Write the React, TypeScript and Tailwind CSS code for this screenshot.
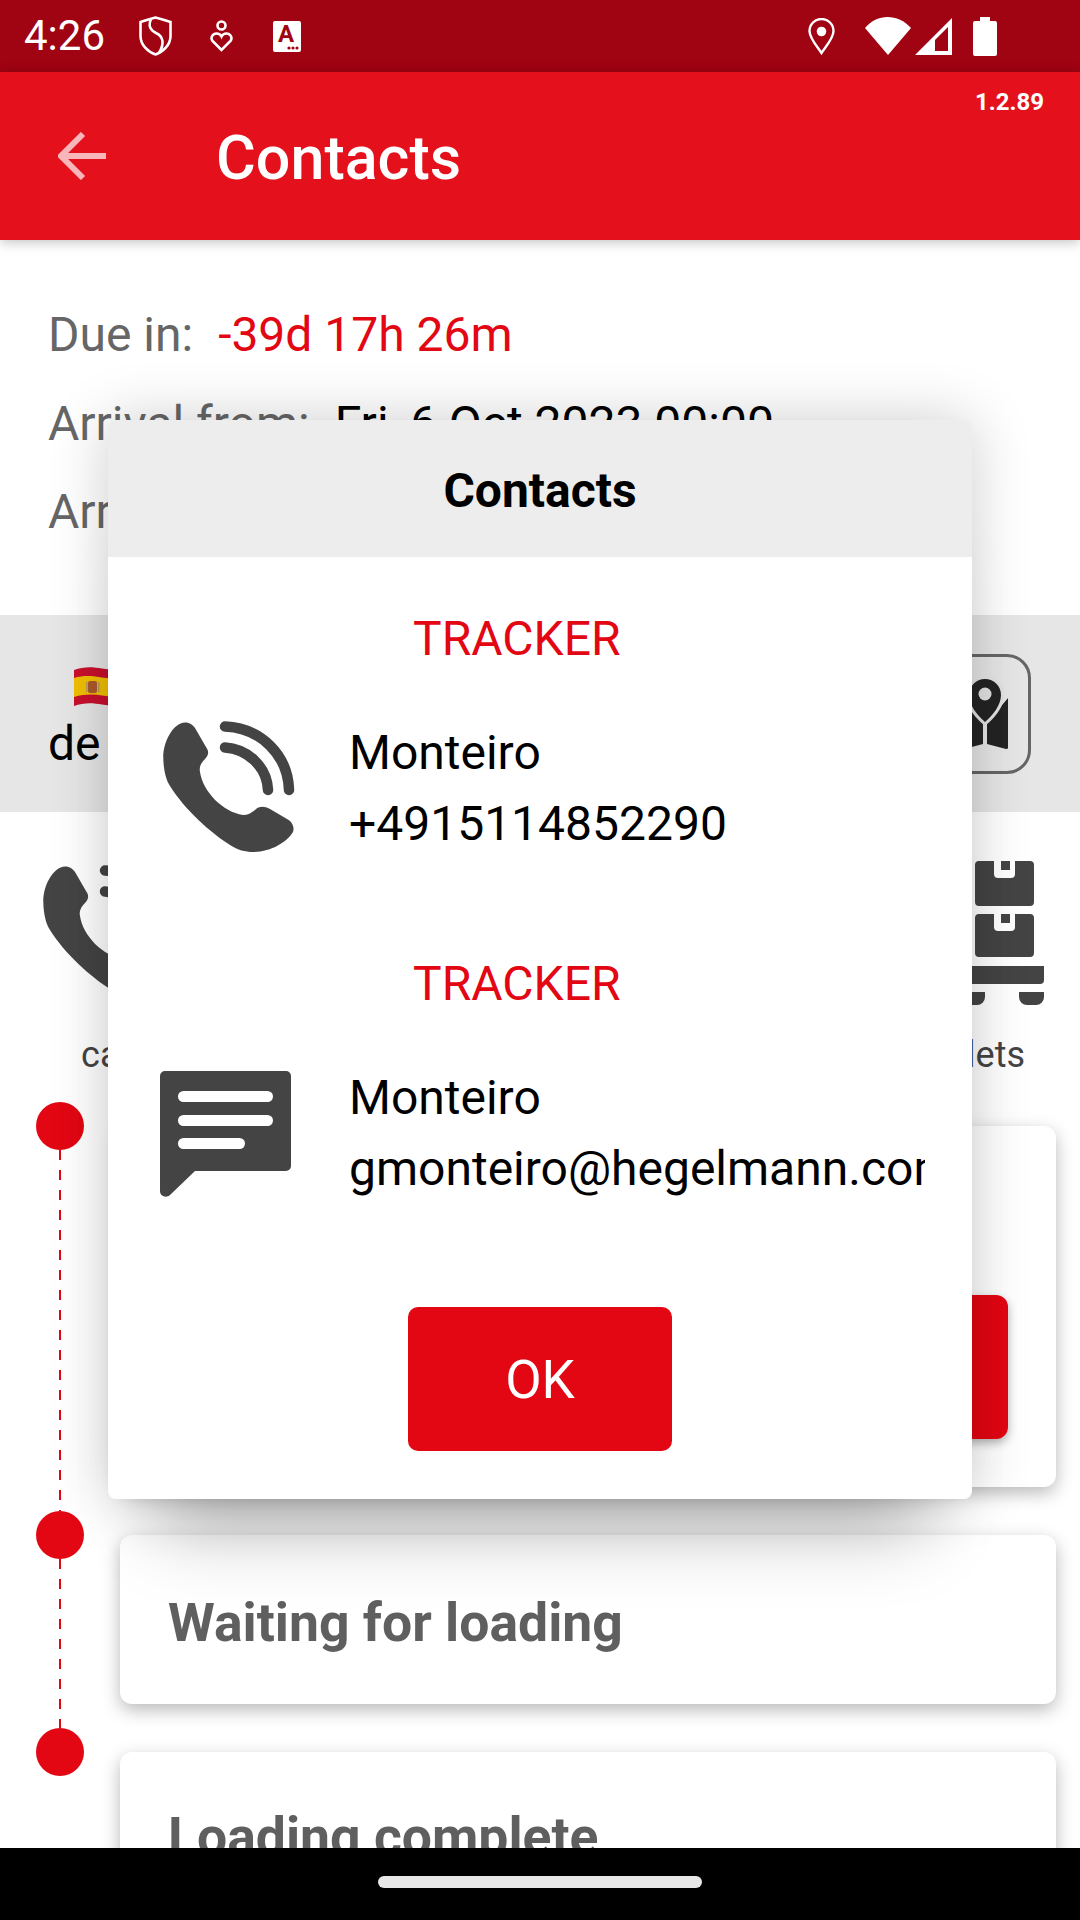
import React from "react";

function PhoneIcon() {
  return (
    <svg width="132" height="132" viewBox="0 0 132 132" className="shrink-0">
      <path
        fill="#444444"
        d="M22 2.500C10 3 0 22 .3 38c.2 12 2.700 22 6.700 28 15 24 41 47 60 59 8 5 15 7 23 7 18 0 34-10 40-20 2-6-2-11-6-13L107 89c-6-3-11-3-15 1-4 3-7 5-12 5C60 92 40 72 37 52c-1-5 1-9 5-13 4-4 4-8 1-12L32 8C29 4 26 2.500 22 2.500Z"
      />
      <path d="M62 6.500C98 8 125 35 126 70" fill="none" stroke="#444444" strokeWidth="10.500" strokeLinecap="round" />
      <path d="M62 27.500C85 29 104 47 105 70" fill="none" stroke="#444444" strokeWidth="10.500" strokeLinecap="round" />
    </svg>
  );
}

function ChatIcon() {
  return (
    <svg width="131" height="126" viewBox="0 0 131 126" className="shrink-0">
      <path
        fill="#444444"
        d="M5 0H126a5 5 0 0 1 5 5V95a5 5 0 0 1-5 5H35L10 124c-3 3-10 2-10-4V5a5 5 0 0 1 5-5Z"
      />
      <rect x="18" y="20" width="95" height="11" rx="5.500" fill="#fff" />
      <rect x="18" y="44" width="95" height="11" rx="5.500" fill="#fff" />
      <rect x="18" y="67" width="67" height="11" rx="5.500" fill="#fff" />
    </svg>
  );
}

function PalletIcon() {
  return (
    <svg width="84" height="144" viewBox="0 0 84 144" className="shrink-0">
      <path fill="#444444" d="M19 0h15v13a4 4 0 0 0 4 4h13a4 4 0 0 0 4-4V0h15a4 4 0 0 1 4 4v37a4 4 0 0 1-4 4H19a4 4 0 0 1-4-4V4a4 4 0 0 1 4-4Z" />
      <rect x="41" y="0" width="9" height="9" fill="#444444" />
      <path fill="#444444" d="M19 53h15v13a4 4 0 0 0 4 4h13a4 4 0 0 0 4-4V53h15a4 4 0 0 1 4 4v35a4 4 0 0 1-4 4H19a4 4 0 0 1-4-4V57a4 4 0 0 1 4-4Z" />
      <rect x="41" y="53" width="9" height="9" fill="#444444" />
      <path fill="#444444" d="M0 105h84v14a4 4 0 0 1-4 4H4a4 4 0 0 1-4-4Z" />
      <path fill="#444444" d="M0 131h25v5a8 8 0 0 1-8 8H8a8 8 0 0 1-8-8Z" />
      <path fill="#444444" d="M59 131h25v5a8 8 0 0 1-8 8h-9a8 8 0 0 1-8-8Z" />
    </svg>
  );
}

function MapPinIcon() {
  return (
    <svg width="46" height="70" viewBox="0 0 46 70">
      <path fill="#242424" d="M25 44L46 19V68.500C46 69.500 45 70 44 70L25 65ZM21 44L0 19V68.500C0 69.500 1 70 2 70L21 65Z" />
      <path
        fill="none"
        stroke="#e2e2e2"
        strokeWidth="6"
        d="M23 0C14 0 7 7 7 16C7 26 15 36 23 43C31 36 39 26 39 16C39 7 32 0 23 0Z"
      />
      <path fill="#242424" d="M23 0C14 0 7 7 7 16C7 26 15 36 23 43C31 36 39 26 39 16C39 7 32 0 23 0Z" />
      <circle cx="23" cy="15" r="6.500" fill="#e2e2e2" />
    </svg>
  );
}

function SpainFlag() {
  return (
    <svg width="50" height="40" viewBox="0 0 50 40">
      <path fill="#c8102e" d="M0 3C10 -1 20 0 28 1.500 36 3 44 3 50 1V37C44 39 36 39 28 37.500 20 36 10 35 0 39Z" />
      <path fill="#f1bf00" d="M0 11C10 8 20 9 28 10.500 36 12 44 11 50 9.500V28.500C44 30 36 30 28 28.500 20 27 10 27 0 30Z" />
      <rect x="14" y="14" width="9" height="12" rx="2" fill="#ad5a2a" />
      <rect x="12" y="15" width="1.500" height="10" fill="#b59a5a" />
      <rect x="24" y="15" width="1.500" height="10" fill="#b59a5a" />
    </svg>
  );
}

function StatusLeft() {
  return (
    <div className="flex items-center">
      <span className="w-[138px] pl-[24px] text-[42px] leading-none text-white">4:26</span>
      <svg width="33" height="40" viewBox="0 0 33 40" fill="none" stroke="#fff" strokeWidth="2.600" className="ml-[1px]">
        <path d="M16.500 1.500C22 3 27 4.500 31.500 6V20C31.500 29 24 36 16.500 38.500 9 36 1.500 29 1.500 20V6C6 4.500 11 3 16.500 1.500Z" />
        <path d="M12 3C9 10 11 14 17 17c7 3 9 10 3 20" />
      </svg>
      <svg width="23" height="32" viewBox="0 0 23 32" fill="none" stroke="#fff" strokeWidth="2.600" className="ml-[38px]">
        <circle cx="11.500" cy="5.500" r="4" />
        <path d="M11.500 30L2.500 21C0 17.500 3 13.500 6.500 13.500c2 0 4 1 5 3 1-2 3-3 5-3 3.500 0 6.500 4 4 7.500Z" />
      </svg>
      <svg width="28" height="31" viewBox="0 0 28 31" className="ml-[40px]">
        <rect width="28" height="31" rx="2" fill="#fff" />
        <text x="13" y="21" textAnchor="middle" fontSize="24" fontWeight="700" fill="#a00311" fontFamily="Roboto, sans-serif">A</text>
        <circle cx="16" cy="27" r="1.600" fill="#a00311" />
        <circle cx="20" cy="27" r="1.600" fill="#a00311" />
        <circle cx="24" cy="27" r="1.600" fill="#a00311" />
      </svg>
    </div>
  );
}

function StatusRight() {
  return (
    <div className="flex items-center pr-[83px]">
      <svg width="27" height="37" viewBox="0 0 27 37" className="mr-[30px]" fill="none">
        <path d="M13.500 35C8 27 1.500 20 1.500 13a12 12 0 0 1 24 0c0 7-6.500 14-12 22Z" stroke="#fff" strokeWidth="2.400" />
        <circle cx="13.500" cy="13.500" r="4.800" fill="#fff" />
      </svg>
      <svg width="46" height="38" viewBox="0 0 46 38" className="mr-[4px]">
        <path fill="#fff" d="M0 11C12-3.600 33-3.600 46 11L23 38Z" />
      </svg>
      <svg width="37" height="37" viewBox="0 0 37 37" className="mr-[21px]">
        <path fill="#fff" d="M37 0V37H0Z" />
        <path fill="#a00311" d="M33 9V33H20V22Z" />
      </svg>
      <svg width="24" height="39" viewBox="0 0 24 39">
        <path fill="#fff" d="M7 0h10v4h5a2 2 0 0 1 2 2v31a2 2 0 0 1-2 2H2a2 2 0 0 1-2-2V6a2 2 0 0 1 2-2h5Z" />
      </svg>
    </div>
  );
}

function Dashes() {
  return (
    <div className="absolute left-[59px] top-[48px] bottom-0 w-[2px] bg-[repeating-linear-gradient(to_bottom,#e30613_0,#e30613_10px,transparent_10px,transparent_20px)]" />
  );
}

function TimelineRow({ children, dashed, cardClass }: { children: React.ReactNode; dashed?: boolean; cardClass: string }) {
  return (
    <div className="relative shrink-0">
      <div className="absolute left-[36px] top-0 w-[48px] h-[48px] rounded-full bg-[#e30613]" />
      {dashed && <Dashes />}
      <div className="ml-[96px] p-[24px] overflow-hidden">
        <div className={`rounded-[12px] bg-white shadow-[0_6px_18px_rgba(0,0,0,0.28)] px-[48px] ${cardClass}`}>{children}</div>
      </div>
    </div>
  );
}

function ContactBlock({
  icon,
  line,
  blockClass,
  labelClass,
  rowClass,
  iconClass,
}: {
  icon: React.ReactNode;
  line: string;
  blockClass: string;
  labelClass: string;
  rowClass: string;
  iconClass: string;
}) {
  return (
    <div className={blockClass}>
      <div className={`text-[48px] leading-[56px] text-[#e30613] ${labelClass}`}>TRACKER</div>
      <div className={`flex items-center ${rowClass}`}>
        <div className={`w-[189px] shrink-0 ${iconClass}`}>{icon}</div>
        <div className="w-[576px] overflow-hidden text-[48px] leading-[71px] text-black whitespace-nowrap">
          <div>Monteiro</div>
          <div>{line}</div>
        </div>
      </div>
    </div>
  );
}

export default function App() {
  return (
    <div className="relative w-[1080px] h-[1920px] overflow-hidden flex flex-col bg-white font-['Roboto',sans-serif]">
      <div className="h-[72px] shrink-0 bg-[#a00311] flex items-center justify-between">
        <StatusLeft />
        <StatusRight />
      </div>

      <div className="relative z-10 h-[168px] shrink-0 bg-[#e4111c] shadow-[0_2px_12px_rgba(0,0,0,0.25)] flex items-center">
        <svg width="48" height="48" viewBox="0 0 48 48" fill="none" stroke="#f7b6b9" strokeWidth="6" className="ml-[58px]">
          <path d="M48 24H3M25 2L3 24l22 22" />
        </svg>
        <span className="ml-[110px] pt-[4px] text-[61px] font-medium leading-none text-white">Contacts</span>
        <span className="absolute right-[36px] top-[16px] text-[24px] font-bold leading-[28px] text-white">1.2.89</span>
      </div>

      <div className="flex-1 min-h-0 overflow-hidden">
        <div className="h-[375px] pt-[51px] pl-[48px] text-[48px] leading-[88.500px] text-[#666666]">
          <div>
            Due in:<span className="ml-[25px] text-[#e30613]">-39d 17h 26m</span>
          </div>
          <div>
            Arrival from:<span className="ml-[25px] text-black">Fri, 6 Oct 2023 00:00</span>
          </div>
          <div>Arrival to:</div>
        </div>

        <div className="h-[197px] bg-[#e6e6e6] flex items-start justify-between pl-[48px] pr-[49px] pt-[39px]">
          <div className="flex flex-col pt-[13px]">
            <div className="pl-[26px] h-[40px]">
              <SpainFlag />
            </div>
            <div className="text-[48px] leading-[56px] text-black mt-[9px]">de</div>
          </div>
          <div className="w-[92px] h-[120px] rounded-[24px] border-[3px] border-[#666666] flex items-center justify-center">
            <MapPinIcon />
          </div>
        </div>

        <div className="h-[290px] flex justify-between pl-[43px] pr-[36px] pt-[49px]">
          <div className="flex flex-col items-center">
            <div className="mt-[3px]">
              <PhoneIcon />
            </div>
            <div className="mt-[38px] text-[36px] leading-[42px] text-[#444444]">call</div>
          </div>
          <div className="flex flex-col items-end">
            <PalletIcon />
            <div className="mt-[29px] mr-[19px] text-[36px] leading-[42px] text-[#444444]">pallets</div>
          </div>
        </div>

        <TimelineRow dashed cardClass="h-[361px] flex items-end pb-[48px]">
          <div className="w-full h-[144px] rounded-[12px] bg-[#e30613] shadow-[0_4px_10px_rgba(0,0,0,0.3)]" />
        </TimelineRow>
        <TimelineRow dashed cardClass="h-[169px] flex items-center">
          <div className="pt-[6px] text-[53.500px] font-bold leading-[56px] text-[#5f5f5f]">Waiting for loading</div>
        </TimelineRow>
        <TimelineRow cardClass="h-[169px] flex items-center">
          <div className="text-[53.500px] font-bold leading-[56px] text-[#5f5f5f]">Loading complete</div>
        </TimelineRow>
      </div>

      <div className="relative z-30 h-[72px] shrink-0 bg-black flex items-center justify-center">
        <div className="w-[324px] h-[12px] rounded-full bg-[#e8e8e8] translate-y-[-2px]" />
      </div>

      <div className="absolute z-20 left-[108px] top-[420px] w-[864px] h-[1079px] rounded-[8px] bg-white shadow-[0_0_60px_rgba(0,0,0,0.2),0_80px_70px_-50px_rgba(0,0,0,0.28)]">
        <div className="h-[137px] pt-[4px] rounded-t-[8px] bg-[#ededed] flex items-center justify-center text-[48px] font-bold text-black">Contacts</div>
        <ContactBlock
          blockClass="pt-[54px] pl-[52px]"
          labelClass="pl-[253px]"
          rowClass="mt-[50px]"
          iconClass="pl-[3px] pb-[4px]"
          icon={<PhoneIcon />}
          line="+4915114852290"
        />
        <ContactBlock
          blockClass="pt-[97px] pl-[52px]"
          labelClass="pl-[253px]"
          rowClass="mt-[50px]"
          iconClass="pl-0 pt-[2px]"
          icon={<ChatIcon />}
          line="gmonteiro@hegelmann.com"
        />
        <div className="flex justify-center mt-[103px]">
          <div className="w-[264px] h-[144px] pt-[4px] rounded-[10px] bg-[#e30613] flex items-center justify-center text-[53px] text-white">OK</div>
        </div>
      </div>
    </div>
  );
}
